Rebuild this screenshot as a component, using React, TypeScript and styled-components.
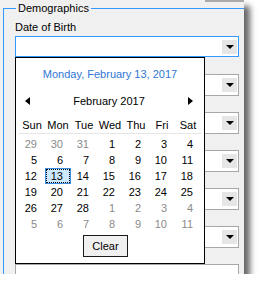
import React from "react";
import styled, { createGlobalStyle } from "styled-components";

const GlobalStyle = createGlobalStyle`
  html, body {
    margin: 0;
    padding: 0;
    background: #fff;
  }
  body {
    font-family: "Liberation Sans", Arial, sans-serif;
    font-size: 11px;
    color: #000;
  }
`;

const Window = styled.div`
  width: 244px;
  height: 274px;
  background: #f0f0f0;
  overflow: hidden;
  box-shadow: 6px 6px 6px rgba(0, 0, 0, 0.6);
`;

const TopEdge = styled.div`
  display: flex;
  justify-content: flex-end;
  height: 2px;
`;

const TopEdgeBar = styled.div`
  width: 39px;
  background: #a9a9a9;
`;

const Group = styled.fieldset`
  margin: 0 0 0 3px;
  padding: 6px 0 0 11px;
  width: 280px;
  min-width: 0;
  border: 1px solid #3399ff;
  border-right: none;
  border-bottom: none;
`;

const Legend = styled.legend`
  margin-left: 1px;
  padding: 0 2px;
  line-height: 13px;
  font-size: 11px;
`;

const Field = styled.div`
  display: flex;
  flex-direction: column;
  gap: 2px;
  height: 38px;
`;

const Label = styled.label`
  line-height: 13px;
  height: 13px;
`;

const Box = styled.div<{ $focused?: boolean }>`
  position: relative;
  display: flex;
  align-items: center;
  justify-content: flex-end;
  flex: none;
  width: 224px;
  height: ${({ $focused }) => ($focused ? "21px" : "22px")};
  box-sizing: border-box;
  padding-right: 1px;
  background: #fff;
  border: 1px solid ${({ $focused }) => ($focused ? "#3399ff" : "#a8a8a8")};
`;

const DropButton = styled.div`
  width: 15px;
  height: 14px;
  display: flex;
  align-items: center;
  justify-content: center;
  background: #e6e6e6;
`;

const Popup = styled.div`
  position: absolute;
  top: calc(100% + 1px);
  left: -1px;
  z-index: 2;
  width: 190px;
  box-sizing: border-box;
  padding: 10px 0 6px;
  background: #fff;
  border: 1px solid #000;
  display: flex;
  flex-direction: column;
`;

const Title = styled.div`
  line-height: 13px;
  text-align: center;
  color: #2f76d6;
`;

const NavRow = styled.div`
  display: flex;
  align-items: center;
  justify-content: space-between;
  height: 16px;
  margin-top: 12px;
  padding: 0 11px 0 9px;
`;

const MonthLabel = styled.span`
  line-height: 13px;
`;

const WeekHeader = styled.div`
  display: grid;
  grid-template-columns: repeat(7, 26px);
  margin: 8px 3px 0;
  border-bottom: 1px solid #e6e6e6;
`;

const HeadCell = styled.div`
  height: 16px;
  line-height: 16px;
  text-align: center;
`;

const DayGrid = styled.div`
  display: grid;
  grid-template-columns: repeat(7, 26px);
  grid-auto-rows: 16px;
  margin: 2px 3px 0;
`;

const DayCell = styled.div<{ $muted?: boolean; $selected?: boolean }>`
  box-sizing: border-box;
  line-height: 14px;
  padding-right: 7px;
  text-align: right;
  color: ${({ $muted }) => ($muted ? "#8a8a8a" : "#000")};
  border: 1px solid ${({ $selected }) => ($selected ? "#3c8ce0" : "transparent")};
  background: ${({ $selected }) => ($selected ? "#cce8ff" : "transparent")};
  outline: ${({ $selected }) => ($selected ? "1px dotted #000" : "none")};
  outline-offset: -2px;
`;

const ButtonRow = styled.div`
  display: flex;
  justify-content: center;
  margin-top: 3px;
  padding-right: 9px;
`;

const ClearButton = styled.button`
  width: 45px;
  height: 22px;
  padding: 0;
  font-family: inherit;
  font-size: 11px;
  color: #000;
  background: #f0f0f0;
  border: 1px solid #1a1a1a;
  border-radius: 0;
`;

const DownArrow = () => (
  <svg width="8" height="4" viewBox="0 0 8 4">
    <polygon points="0,0 8,0 4,4" fill="#000" />
  </svg>
);

const SideArrow = ({ dir }: { dir: "left" | "right" }) => (
  <svg width="5" height="8" viewBox="0 0 5 8">
    <polygon points={dir === "left" ? "5,0 5,8 0,4" : "0,0 0,8 5,4"} fill="#000" />
  </svg>
);

const weekDays = ["Sun", "Mon", "Tue", "Wed", "Thu", "Fri", "Sat"];

// February 2017, six rows including spill-over days
const days: { d: number; muted?: boolean }[] = [
  ...[29, 30, 31].map((d) => ({ d, muted: true })),
  ...Array.from({ length: 28 }, (_, i) => ({ d: i + 1 })),
  ...Array.from({ length: 11 }, (_, i) => ({ d: i + 1, muted: true })),
];

const otherFields = ["Gender", "Race", "Ethnicity", "Marital Status", "Language"];

export default function App() {
  return (
    <>
      <GlobalStyle />
      <Window>
        <TopEdge>
          <TopEdgeBar />
        </TopEdge>
        <Group>
          <Legend>Demographics</Legend>
          <Field>
            <Label>Date of Birth</Label>
            <Box $focused>
              <DropButton>
                <DownArrow />
              </DropButton>
              <Popup>
                <Title>Monday, February 13, 2017</Title>
                <NavRow>
                  <SideArrow dir="left" />
                  <MonthLabel>February 2017</MonthLabel>
                  <SideArrow dir="right" />
                </NavRow>
                <WeekHeader>
                  {weekDays.map((w) => (
                    <HeadCell key={w}>{w}</HeadCell>
                  ))}
                </WeekHeader>
                <DayGrid>
                  {days.map((day, i) => (
                    <DayCell
                      key={i}
                      $muted={day.muted}
                      $selected={!day.muted && day.d === 13}
                    >
                      {day.d}
                    </DayCell>
                  ))}
                </DayGrid>
                <ButtonRow>
                  <ClearButton>Clear</ClearButton>
                </ButtonRow>
              </Popup>
            </Box>
          </Field>
          {otherFields.map((name) => (
            <Field key={name}>
              <Label>{name}</Label>
              <Box>
                <DropButton>
                  <DownArrow />
                </DropButton>
              </Box>
            </Field>
          ))}
          <Field>
            <Label>Religion</Label>
            <Box />
          </Field>
        </Group>
      </Window>
    </>
  );
}
